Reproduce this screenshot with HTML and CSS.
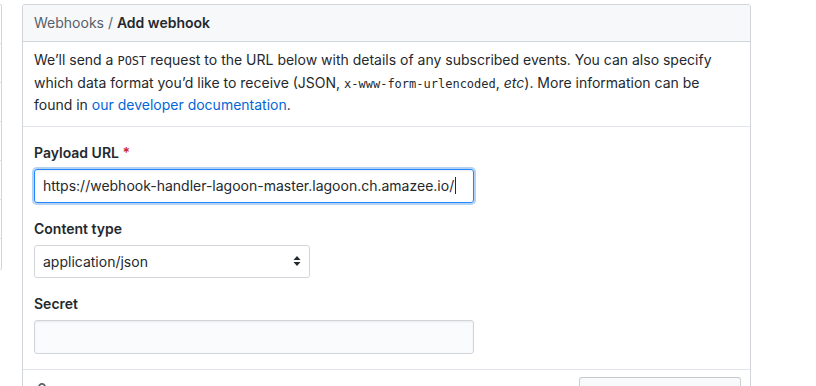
FILE: index.html
```html
<!DOCTYPE html>
<html>
<head>
<meta charset="utf-8">
<link rel="stylesheet" href="styles.css">
</head>
<body>
<div class="page">
  <nav class="sidebar">
    <div class="side-item"></div>
    <div class="side-item"></div>
    <div class="side-item"></div>
    <div class="side-item"></div>
    <div class="side-item"></div>
    <div class="side-item"></div>
    <div class="side-item last"></div>
  </nav>
  <div class="panel">
    <div class="panel-head"><span class="crumb">Webhooks /</span> <strong>Add webhook</strong></div>
    <p class="desc">We’ll send a <code>POST</code> request to the URL below with details of any subscribed events. You can also specify<br>which data format you’d like to receive (JSON, <code>x-www-form-urlencoded</code>, <em>etc</em>). More information can be<br>found in <a href="#">our developer documentation</a>.</p>
    <div class="form">
      <div class="field">
        <label class="label">Payload URL <span class="req">*</span></label>
        <div class="input focus"><span>https://webhook-handler-lagoon-master.lagoon.ch.amazee.io/</span><span class="caret"></span></div>
      </div>
      <div class="field">
        <label class="label">Content type</label>
        <div class="select"><span>application/json</span>
          <svg class="arrows" width="8" height="12" viewBox="0 0 8 12"><path d="M4 1 L7.5 5 H0.5 Z M4 11 L7.5 7 H0.5 Z" fill="#24292e"/></svg>
        </div>
      </div>
      <div class="field">
        <label class="label">Secret</label>
        <div class="input secret"></div>
      </div>
    </div>
    <div class="ssl-row">
      <div class="ssl-text">
        <svg class="lock" width="12" height="16" viewBox="0 0 12 16"><path d="M4 13H3v-1h1v1zm8-6v7c0 .55-.45 1-1 1H1c-.55 0-1-.45-1-1V7c0-.55.45-1 1-1h1V4c0-2.190 1.8-4 4-4s4 1.81 4 4v2h1c.55 0 1 .45 1 1zM3.8 6h4.41V4c0-1.220-.98-2.200-2.200-2.200-1.220 0-2.200.98-2.200 2.200v2H3.8zM11 7H2v7h9V7zM4 8H3v1h1V8zm0 2H3v1h1v-1z" fill="#586069"/></svg>
        <span>By default, we verify SSL certificates when delivering payloads.</span>
      </div>
      <button class="btn-danger">Disable SSL verification</button>
    </div>
  </div>
</div>
</body>
</html>
```

FILE: styles.css
```css
html, body {
  margin: 0;
  padding: 0;
  background: #fff;
  overflow: hidden;
}
body {
  font-family: Inter, "Liberation Sans", Arial, sans-serif;
  font-size: 14px;
  color: #24292e;
}
.page {
  display: flex;
  align-items: flex-start;
  padding-top: 4px;
}
.sidebar {
  width: 1px;
  border: 1px solid #d1d5da;
  border-left: 0;
  border-radius: 0 3px 3px 0;
  margin-right: 20px;
}
.side-item {
  height: 38px;
  border-bottom: 1px solid #e1e4e8;
}
.side-item.last {
  height: 30px;
  border-bottom: 0;
}
.panel {
  width: 727px;
  border: 1px solid #d1d5da;
  border-radius: 3px;
  height: 400px;
}
.panel-head {
  background: #f6f8fa;
  height: 36px;
  line-height: 36px;
  padding: 0 11px;
  border-bottom: 1px solid #d1d5da;
  border-radius: 3px 3px 0 0;
  font-size: 14px;
}
.crumb {
  color: #586069;
}
.panel-head strong {
  color: #24292e;
  font-weight: 600;
}
.desc {
  margin: 0;
  padding: 7px 11px 9px;
  line-height: 22.5px;
  border-bottom: 1px solid #e1e4e8;
  white-space: nowrap;
}
.desc code {
  font-family: "DejaVu Sans Mono", monospace;
  font-size: 12px;
  line-height: 0;
}
.desc a {
  color: #0366d6;
  text-decoration: none;
}
.form {
  padding: 16px 11px 15px;
  border-bottom: 1px solid #e1e4e8;
  display: flex;
  flex-direction: column;
  gap: 16px;
}
.field {
  display: flex;
  flex-direction: column;
  gap: 6px;
}
.label {
  font-weight: 600;
  line-height: 20px;
}
.req {
  color: #cb2431;
}
.input {
  box-sizing: border-box;
  width: 440px;
  height: 34px;
  border: 1px solid #d1d5da;
  border-radius: 3px;
  padding: 0 8px;
  display: flex;
  align-items: center;
  font-size: 14px;
  box-shadow: inset 0 1px 2px rgba(27,31,35,.075);
}
.input.focus {
  border-color: #2188ff;
  box-shadow: inset 0 1px 2px rgba(27,31,35,.075), 0 0 0 2px rgba(3,102,214,.3);
  color: #24292e;
}
.caret {
  display: inline-block;
  width: 1px;
  height: 17px;
  background: #24292e;
  margin-left: 1px;
}
.input.secret {
  background: #fafbfc;
}
.select {
  box-sizing: border-box;
  width: 276px;
  height: 33px;
  border: 1px solid #d1d5da;
  border-radius: 3px;
  padding: 0 8px;
  display: flex;
  align-items: center;
  justify-content: space-between;
  background: #fff;
}
.ssl-row {
  display: flex;
  justify-content: space-between;
  align-items: flex-start;
  padding: 7px 9px 0 13px;
}
.ssl-text {
  display: flex;
  align-items: center;
  gap: 6px;
  padding-top: 6px;
  color: #586069;
  font-weight: 600;
}
.lock {
  flex: none;
}
.btn-danger {
  font-family: inherit;
  font-size: 13px;
  font-weight: 600;
  color: #cb2431;
  background: linear-gradient(-180deg, #fafbfc 0%, #eff3f6 90%);
  border: 1px solid rgba(27,31,35,.2);
  border-radius: 3px;
  width: 162px;
  height: 30px;
  padding: 0;
}
```
